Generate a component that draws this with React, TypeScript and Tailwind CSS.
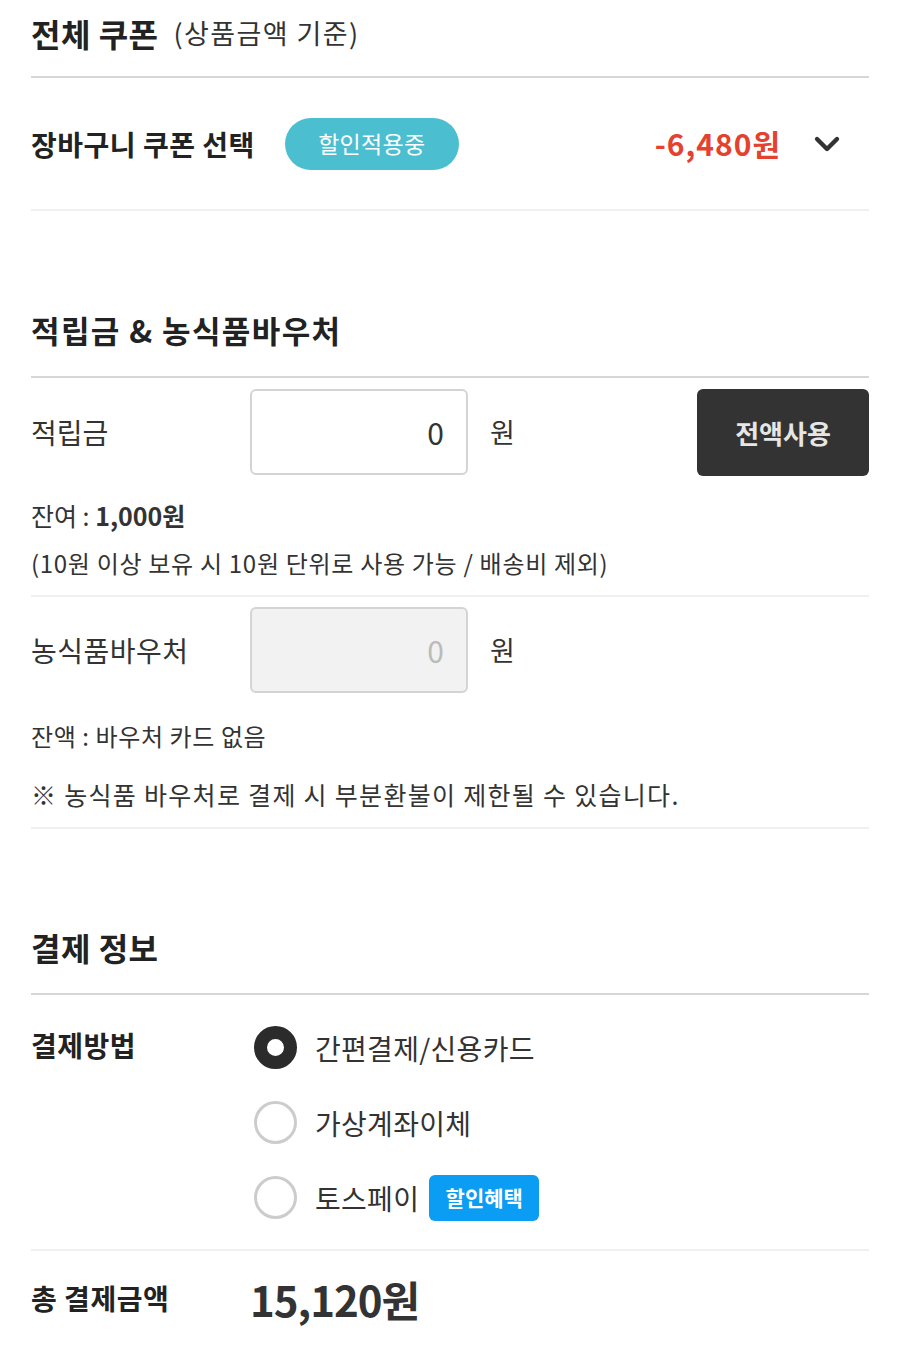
import { ChevronDown } from 'lucide-react'

const font = { fontFamily: '"Noto Sans CJK KR", "Noto Sans", sans-serif' }

function Radio({ checked }: { checked?: boolean }) {
  return checked ? (
    <span className="box-border w-[43px] h-[43px] rounded-full border-[13px] border-[#2b2b2b] bg-white" />
  ) : (
    <span className="box-border w-[43px] h-[43px] rounded-full border-[3px] border-[#cccccc] bg-white" />
  )
}

export default function App() {
  return (
    <div className="w-[900px] min-h-[1348px] bg-white text-[#333] px-[31px]" style={font}>
      {/* 전체 쿠폰 */}
      <div className="h-[78px] pb-[10px] flex items-center gap-[15px] border-b-2 border-[#d6d6d6]">
        <span className="text-[32px] font-bold text-[#222] tracking-[0.5px]">전체 쿠폰</span>
        <span className="text-[27px] text-[#333] tracking-[1.4px]">(상품금액 기준)</span>
      </div>

      <div className="h-[133px] flex items-center border-b-2 border-[#f0f0f0]">
        <span className="text-[28px] font-bold text-[#222] tracking-[0.5px]">장바구니 쿠폰 선택</span>
        <span className="ml-[30px] w-[174px] h-[52px] rounded-full bg-[#4bbfcf] text-white text-[23px] tracking-[0.3px] flex items-center justify-center">
          할인적용중
        </span>
        <span className="ml-auto text-[30px] font-bold text-[#e5412f] tracking-[1px]">-6,480원</span>
        <ChevronDown className="ml-[26px] mr-[22px] w-[40px] h-[40px] text-[#333]" strokeWidth={2.6} />
      </div>

      {/* 적립금 & 농식품바우처 */}
      <div className="h-[167px] pb-[26px] flex items-end border-b-2 border-[#d6d6d6]">
        <span className="text-[31px] leading-[40px] font-bold text-[#222] tracking-[1.4px]">적립금 &amp; 농식품바우처</span>
      </div>

      <div className="pt-[11px] pb-[8px] border-b-2 border-[#f0f0f0]">
        <div className="flex items-center h-[86px]">
          <span className="w-[219px] text-[28px]">적립금</span>
          <div className="box-border w-[218px] h-[86px] border-2 border-[#d4d4d4] rounded-[6px] flex items-center justify-end pr-[22px] text-[30px] text-[#333]">
            0
          </div>
          <span className="ml-[22px] text-[27px]">원</span>
          <button className="ml-auto w-[172px] h-[87px] rounded-[6px] bg-[#333333] text-[#e6e6e6] text-[26px] font-bold">
            전액사용
          </button>
        </div>
        <div className="mt-[16px] text-[25px] leading-[48px]">
          잔여 : <span className="font-bold">1,000원</span>
        </div>
        <div className="text-[24px] leading-[48px] tracking-[0.7px]">(10원 이상 보유 시 10원 단위로 사용 가능 / 배송비 제외)</div>
      </div>

      <div className="pt-[10px] pb-[9px] border-b-2 border-[#f0f0f0]">
        <div className="flex items-center h-[86px]">
          <span className="w-[219px] text-[28px] tracking-[0.5px]">농식품바우처</span>
          <div className="box-border w-[218px] h-[86px] border-2 border-[#d4d4d4] rounded-[6px] bg-[#f2f2f2] flex items-center justify-end pr-[22px] text-[30px] text-[#bbbbbb]">
            0
          </div>
          <span className="ml-[22px] text-[27px]">원</span>
        </div>
        <div className="mt-[19px] text-[24px] leading-[48px] tracking-[0.6px]">잔액 : 바우처 카드 없음</div>
        <div className="mt-[10px] text-[25px] leading-[48px] tracking-[1.3px]">※ 농식품 바우처로 결제 시 부분환불이 제한될 수 있습니다.</div>
      </div>

      {/* 결제 정보 */}
      <div className="h-[166px] pb-[26px] flex items-end border-b-2 border-[#d6d6d6]">
        <span className="text-[32px] leading-[40px] font-bold text-[#222] tracking-[0.5px]">결제 정보</span>
      </div>

      <div className="pt-[15px] pb-[14px] flex border-b-2 border-[#f0f0f0]">
        <div className="w-[223px] h-[70px] flex items-center">
          <span className="text-[28px] font-bold text-[#222] tracking-[0.5px]">결제방법</span>
        </div>
        <div className="flex flex-col">
          <label className="h-[75px] flex items-center gap-[18px]">
            <Radio checked />
            <span className="text-[28px] tracking-[0.3px]">간편결제/신용카드</span>
          </label>
          <label className="h-[75px] flex items-center gap-[18px]">
            <Radio />
            <span className="text-[28px] tracking-[0.3px]">가상계좌이체</span>
          </label>
          <label className="h-[75px] flex items-center gap-[18px]">
            <Radio />
            <span className="text-[28px] tracking-[0.3px]">토스페이</span>
            <span className="-ml-[8px] w-[110px] h-[46px] rounded-[6px] bg-[#0b9df3] text-white text-[21px] font-bold flex items-center justify-center">
              할인혜택
            </span>
          </label>
        </div>
      </div>

      <div className="h-[94px] flex items-center">
        <span className="w-[219px] text-[28px] font-bold text-[#222] tracking-[0.5px]">총 결제금액</span>
        <span className="text-[42px] font-bold text-[#333] tracking-[-1px]">15,120원</span>
      </div>
    </div>
  )
}
